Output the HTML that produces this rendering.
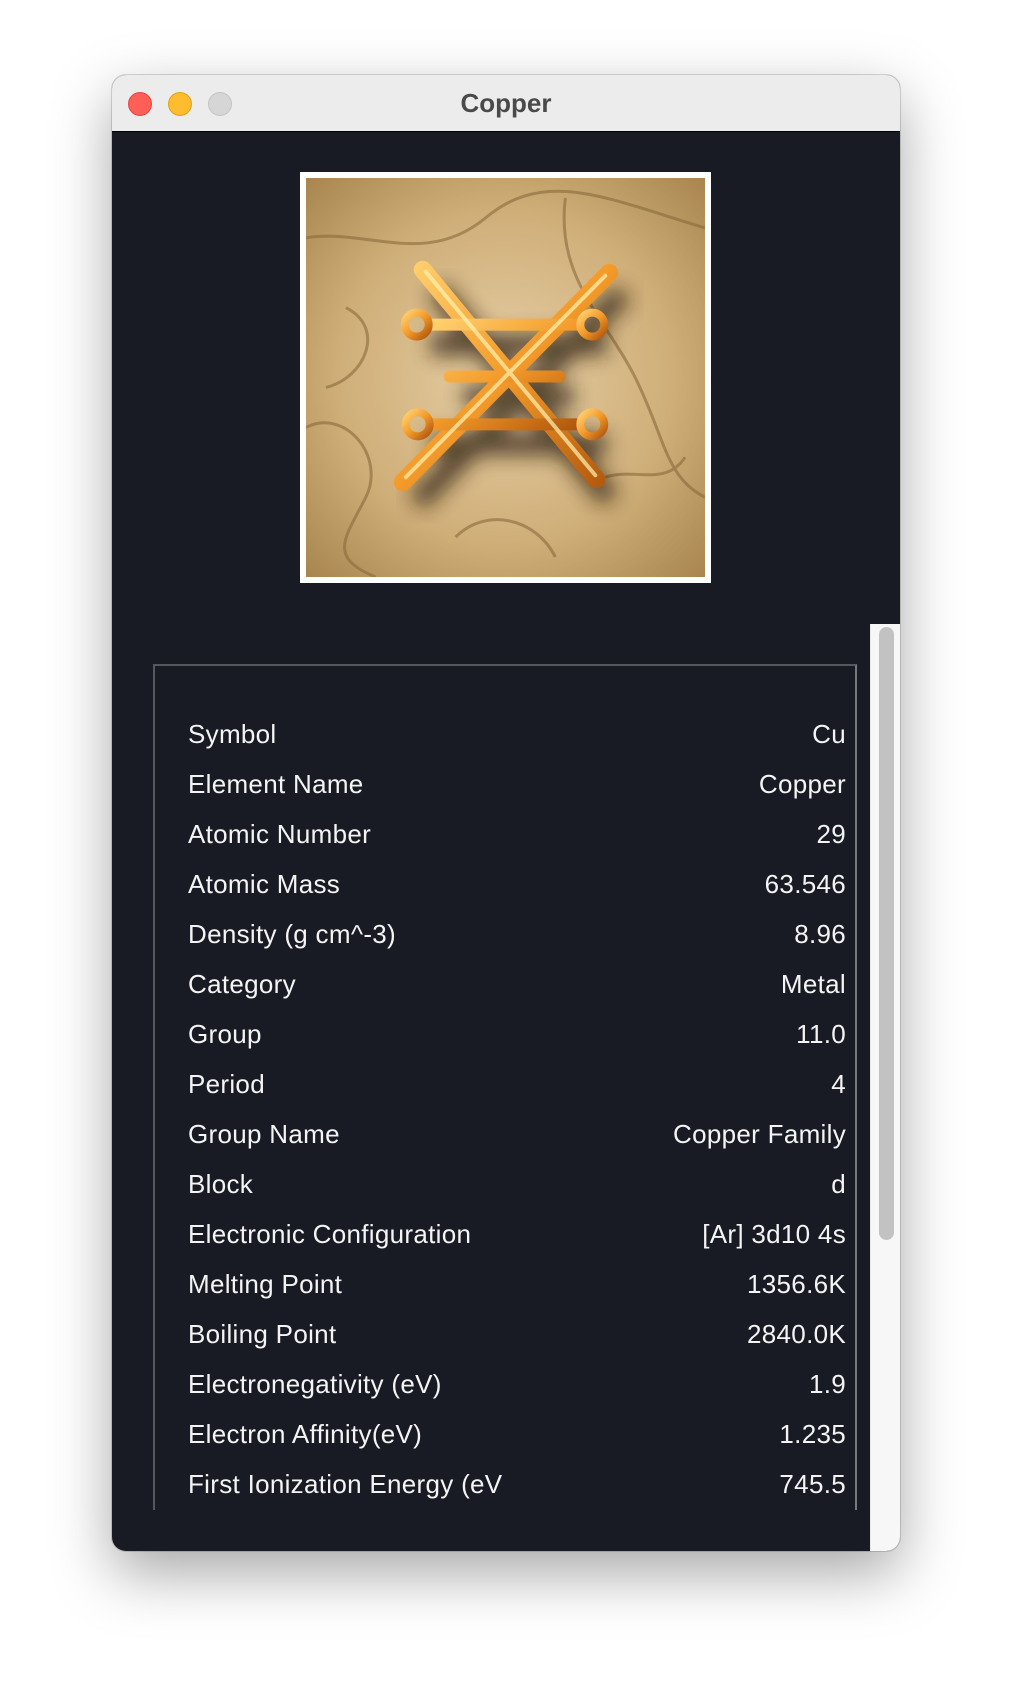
<!DOCTYPE html>
<html><head><meta charset="utf-8"><style>
*{margin:0;padding:0;box-sizing:border-box}
body{width:1012px;height:1700px;background:#fff;position:relative;overflow:hidden;font-family:"Liberation Sans",sans-serif}
.win{position:absolute;left:112px;top:75px;width:788px;height:1476px;border-radius:14px;background:#181b23;overflow:hidden;box-shadow:0 22px 60px rgba(0,0,0,.35),0 0 0 1px rgba(0,0,0,.15)}
.tb{position:absolute;left:0;top:0;width:788px;height:57px;background:#ececec;border-bottom:1px solid #000}
.dot{position:absolute;top:17px;width:24px;height:24px;border-radius:50%}
.title{position:absolute;left:0;right:0;top:13px;text-align:center;font-weight:bold;font-size:26px;color:#4a4a4a}
.frame{position:absolute;left:188px;top:97px;width:411px;height:411px;background:#fff;padding:6px}
.tbl{position:absolute;left:41px;top:589px;width:704px;height:846px;border-top:2px solid #55575c;border-left:2px solid #55575c;border-right:2px solid #77797d}
.row{position:absolute;left:33px;right:9px;height:30px;font-size:26px;letter-spacing:.3px;color:#f4f4f4;line-height:30px}
.row span{position:absolute;right:0}
.track{position:absolute;left:758px;top:549px;width:30px;height:930px;background:#f7f7f7;border-left:1px solid #e6e6e6}
.thumb{position:absolute;left:8px;top:3px;width:15px;height:613px;border-radius:8px;background:#c2c2c2}
</style></head><body>
<div class="win">
<div class="tb">
<div class="dot" style="left:16px;background:#fe5f57;border:1px solid #e2463f"></div>
<div class="dot" style="left:56px;background:#febc2e;border:1px solid #e0a020"></div>
<div class="dot" style="left:96px;background:#d6d6d6;border:1px solid #c4c4c4"></div>
<div class="title">Copper</div>
</div>
<div class="frame">
<svg width="399" height="399" viewBox="0 0 400 400">
<defs>
<radialGradient id="bg" cx="50%" cy="50%" r="70%"><stop offset="0" stop-color="#e6cfa6"/><stop offset=".6" stop-color="#cfae78"/><stop offset="1" stop-color="#a98650"/></radialGradient>
<linearGradient id="cu" x1="0" y1="0" x2="1" y2="1"><stop offset="0" stop-color="#ffd070"/><stop offset=".5" stop-color="#f39a2a"/><stop offset="1" stop-color="#b2580e"/></linearGradient>
<filter id="sh"><feGaussianBlur stdDeviation="10"/></filter>
</defs>
<rect width="400" height="400" fill="url(#bg)"/>
<g fill="none" stroke="#8a6a3c" stroke-width="3" opacity=".6">
<path d="M0 60 C60 50 120 90 180 40 S300 20 400 50"/>
<path d="M260 20 C250 100 300 140 330 200 S360 300 400 320"/>
<path d="M0 250 C40 230 80 280 60 320 S20 380 70 400"/>
<path d="M300 300 C330 290 360 310 380 280"/>
<path d="M150 360 C180 330 230 340 250 380"/>
<path d="M40 130 C80 150 60 200 20 210"/>
</g>
<g transform="translate(14,20)" filter="url(#sh)" opacity=".75" stroke="#2a1a08" stroke-width="22" fill="none">
<path d="M117 92 L291 302 M304 95 L97 305 M111 147 H287 M112 247 H287 M144 199 H254"/>
</g>
<g stroke="url(#cu)" stroke-linecap="round" fill="none">
<path d="M117 92 L291 302 M304 95 L97 305" stroke-width="18"/>
<path d="M125 147 H273 M126 247 H273 M144 199 H254" stroke-width="12"/>
<circle cx="111" cy="147" r="12" stroke-width="8"/><circle cx="287" cy="147" r="12" stroke-width="8"/>
<circle cx="112" cy="247" r="12" stroke-width="8"/><circle cx="287" cy="247" r="12" stroke-width="8"/>
</g>
<g stroke="#fff3b0" stroke-width="4" stroke-linecap="round" opacity=".7" fill="none">
<path d="M120 94 L290 298 M300 98 L100 300"/>
</g>
</svg>
</div>
<div class="tbl">
<div class="row" style="top:53px">Symbol<span>Cu</span></div>
<div class="row" style="top:103px">Element Name<span>Copper</span></div>
<div class="row" style="top:153px">Atomic Number<span>29</span></div>
<div class="row" style="top:203px">Atomic Mass<span>63.546</span></div>
<div class="row" style="top:253px">Density (g cm^-3)<span>8.96</span></div>
<div class="row" style="top:303px">Category<span>Metal</span></div>
<div class="row" style="top:353px">Group<span>11.0</span></div>
<div class="row" style="top:403px">Period<span>4</span></div>
<div class="row" style="top:453px">Group Name<span>Copper Family</span></div>
<div class="row" style="top:503px">Block<span>d</span></div>
<div class="row" style="top:553px">Electronic Configuration<span>[Ar] 3d10 4s</span></div>
<div class="row" style="top:603px">Melting Point<span>1356.6K</span></div>
<div class="row" style="top:653px">Boiling Point<span>2840.0K</span></div>
<div class="row" style="top:703px">Electronegativity (eV)<span>1.9</span></div>
<div class="row" style="top:753px">Electron Affinity(eV)<span>1.235</span></div>
<div class="row" style="top:803px">First Ionization Energy (eV<span style="background:#181b23;padding-left:20px">745.5</span></div>
</div>
<div class="track"><div class="thumb"></div></div>
</div>
</body></html>
